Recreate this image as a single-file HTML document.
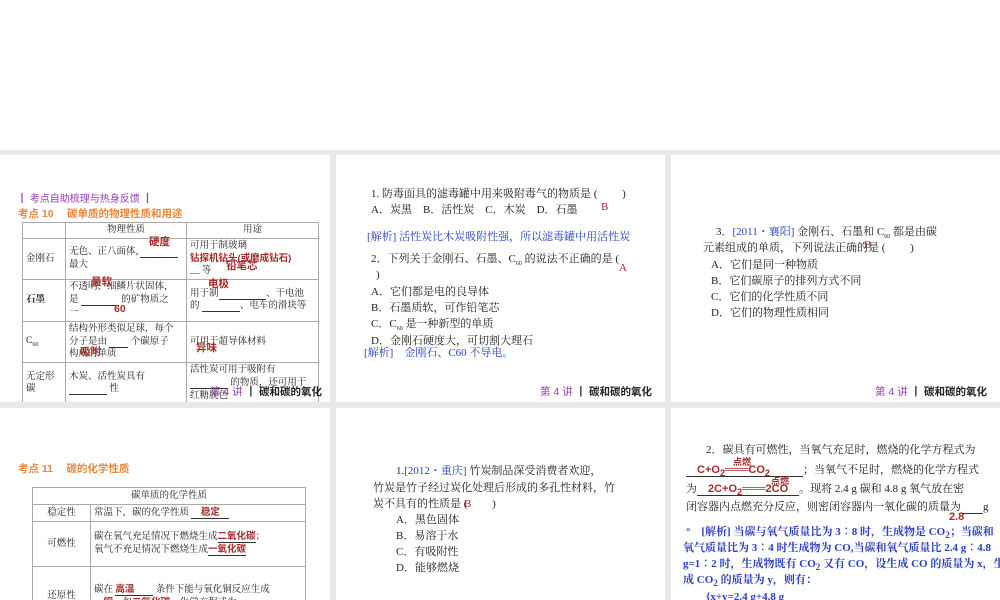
<!DOCTYPE html>
<html><head><meta charset="utf-8"><style>
*{margin:0;padding:0;box-sizing:border-box}
body{width:1000px;height:600px;background:#fff;position:relative;overflow:hidden;font-family:"Liberation Serif","Noto Serif CJK SC",serif;font-size:10.5px;color:#222}
.bg{position:absolute;left:0;top:150px;width:1000px;height:450px;background:#e9e9e9}
.p{position:absolute;background:#fff;overflow:hidden}
.a{position:absolute;white-space:nowrap;line-height:1.45}
.q .a{font-size:11px}
.r{color:#a52a2a;font-family:"Liberation Sans","Noto Sans CJK SC",sans-serif;font-weight:bold}
.bl{color:#2a3fc0}
.or{color:#e8873a;font-family:"Liberation Sans","Noto Sans CJK SC",sans-serif;font-weight:bold;font-size:10.5px}
.pu{color:#9a3ab8;font-family:"Liberation Sans","Noto Sans CJK SC",sans-serif}
table{border-collapse:collapse;position:absolute}
td{border:1px solid #aaa;font-size:9.5px;line-height:1.35;padding:1px 3px;vertical-align:middle}
.ft{position:absolute;font-family:"Liberation Sans","Noto Sans CJK SC",sans-serif;font-size:10.5px;white-space:nowrap}
u{text-decoration:none;border-bottom:1px solid #333}
</style></head><body>
<div class="bg"></div>

<div class="p" style="left:0;top:155px;width:330px;height:247px">
<div class="a pu" style="left:17px;top:38px;font-size:10px">┃ 考点自助梳理与热身反馈 ┃</div>
<div class="a or" style="left:18px;top:52px">考点 10　 碳单质的物理性质和用途</div>
<table style="left:22px;top:67px;width:297px">
<tr style="height:15px"><td style="width:43px"></td><td style="width:121px;text-align:center">物理性质</td><td style="text-align:center">用途</td></tr>
<tr style="height:40px"><td>金刚石</td><td>无色、正八面体，<u>　　　　</u><br>最大</td><td>可用于制玻璃<br><span class="r" style="color:#a52a2a">钻探机钻头(或磨成钻石)</span><br>__ 等</td></tr>
<tr style="height:39px"><td><b>石墨</b></td><td>不透明、细鳞片状固体，<br>是 <u>　　　　</u> 的矿物质之<br>一</td><td>用于制<u>　　　　　</u>、干电池<br>的 <u>　　　　</u>、电车的滑块等</td></tr>
<tr style="height:39px"><td>C<sub style="font-size:6px">60</sub></td><td>结构外形类似足球，每个<br>分子是由 <u>　　</u> 个碳原子<br>构成的单质</td><td>可用于超导体材料</td></tr>
<tr style="height:39px"><td>无定形<br>碳</td><td>木炭、活性炭具有<br><u>　　　　</u> 性</td><td>活性炭可用于吸附有<br><u>　　　　</u> 的物质，还可用于<br>红糖脱色</td></tr>
</table>
<div class="a r" style="left:149px;top:80px">硬度</div>
<div class="a r" style="left:226px;top:104px">铅笔芯</div>
<div class="a r" style="left:91px;top:120px">最软</div>
<div class="a r" style="left:208px;top:122px">电极</div>
<div class="a r" style="left:114px;top:147px">60</div>
<div class="a r" style="left:80px;top:190px">吸附</div>
<div class="a r" style="left:196px;top:186px">异味</div>
<div class="ft" style="left:210px;top:229px"><span class="pu">第 4 讲</span> ┃ <b>碳和碳的氧化</b></div>
</div>

<div class="p q" style="left:336px;top:155px;width:329px;height:247px">
<div class="a" style="left:35px;top:32px">1. 防毒面具的滤毒罐中用来吸附毒气的物质是 (　　 )</div>
<div class="a" style="left:35px;top:48px">A．炭黑　B．活性炭　C．木炭　D．石墨</div>
<div class="a" style="left:265px;top:45px;color:#a52a2a">B</div>
<div class="a bl" style="left:31px;top:75px">[解析] 活性炭比木炭吸附性强，所以滤毒罐中用活性炭</div>
<div class="a" style="left:35px;top:97px">2．下列关于金刚石、石墨、C<sub style="font-size:6px">60</sub> 的说法不正确的是 (</div>
<div class="a" style="left:283px;top:106px;color:#a52a2a">A</div>
<div class="a" style="left:40px;top:113px">)</div>
<div class="a" style="left:35px;top:130px">A．它们都是电的良导体</div>
<div class="a" style="left:35px;top:146px">B．石墨质软，可作铅笔芯</div>
<div class="a" style="left:35px;top:162px">C．C<sub style="font-size:6px">60</sub> 是一种新型的单质</div>
<div class="a" style="left:35px;top:179px">D．金刚石硬度大，可切割大理石</div>
<div class="a bl" style="left:28px;top:191px">[解析]　金刚石、C60 不导电。</div>
<div class="ft" style="left:204px;top:229px"><span class="pu">第 4 讲</span> ┃ <b>碳和碳的氧化</b></div>
</div>

<div class="p q" style="left:671px;top:155px;width:329px;height:247px">
<div class="a" style="left:45px;top:70px">3．<span class="bl">[2011・襄阳]</span> 金刚石、石墨和 C<sub style="font-size:6px">60</sub> 都是由碳</div>
<div class="a" style="left:32px;top:86px">元素组成的单质，下列说法正确的是 (　　 )</div>
<div class="a" style="left:193px;top:83px;color:#a52a2a">B</div>
<div class="a" style="left:40px;top:103px">A．它们是同一种物质</div>
<div class="a" style="left:40px;top:119px">B．它们碳原子的排列方式不同</div>
<div class="a" style="left:40px;top:135px">C．它们的化学性质不同</div>
<div class="a" style="left:40px;top:151px">D．它们的物理性质相同</div>
<div class="ft" style="left:204px;top:229px"><span class="pu">第 4 讲</span> ┃ <b>碳和碳的氧化</b></div>
</div>

<div class="p" style="left:0;top:408px;width:330px;height:192px">
<div class="a or" style="left:18px;top:54px">考点 11　 碳的化学性质</div>
<table style="left:32px;top:79px;width:274px">
<tr style="height:17px"><td colspan="2" style="text-align:center">碳单质的化学性质</td></tr>
<tr style="height:17px"><td style="width:58px;text-align:center">稳定性</td><td>常温下，碳的化学性质 <u class="r">　稳定　</u></td></tr>
<tr style="height:45px"><td style="text-align:center">可燃性</td><td>碳在氧气充足情况下燃烧生成<u class="r">二氧化碳</u>；<br>氧气不充足情况下燃烧生成<u class="r">一氧化碳</u></td></tr>
<tr style="height:60px"><td style="text-align:center">还原性</td><td>碳在 <u><span class="r">高温</span>　　</u> 条件下能与氧化铜反应生成<br>　<span class="r">铜</span>　和<span class="r">二氧化碳</span>，化学方程式为</td></tr>
</table>
</div>

<div class="p q" style="left:336px;top:408px;width:329px;height:192px">
<div class="a" style="left:60px;top:56px">1.<span class="bl">[2012・重庆]</span> 竹炭制品深受消费者欢迎，</div>
<div class="a" style="left:37px;top:73px">竹炭是竹子经过炭化处理后形成的多孔性材料，竹</div>
<div class="a" style="left:37px;top:89px">炭不具有的性质是 (　　 )</div>
<div class="a" style="left:128px;top:89px;color:#a52a2a">B</div>
<div class="a" style="left:60px;top:105px">A．黑色固体</div>
<div class="a" style="left:60px;top:121px">B．易溶于水</div>
<div class="a" style="left:60px;top:137px">C．有吸附性</div>
<div class="a" style="left:60px;top:153px">D．能够燃烧</div>
</div>

<div class="p q" style="left:671px;top:408px;width:329px;height:192px">
<div class="a" style="left:35px;top:35px">2．碳具有可燃性，当氧气充足时，燃烧的化学方程式为</div>
<div class="a" style="left:15px;top:55px"><u>　<span class="r">C+O<sub>2</sub>═══CO<sub>2</sub></span>　　　</u>；当氧气不足时，燃烧的化学方程式</div>
<div class="a r" style="left:62px;top:48px;font-size:9px">点燃</div>
<div class="a" style="left:15px;top:74px">为<u>　<span class="r">2C+O<sub>2</sub>═══2CO</span>　</u>。现将 2.4 g 碳和 4.8 g 氧气放在密</div>
<div class="a r" style="left:100px;top:67px;font-size:9px">点燃</div>
<div class="a" style="left:15px;top:92px">闭容器内点燃充分反应，则密闭容器内一氧化碳的质量为<u>　　</u>g</div>
<div class="a r" style="left:278px;top:102px">2.8</div>
<div class="a bl" style="left:15px;top:117px;font-weight:bold">°　[解析] 当碳与氧气质量比为 3∶8 时，生成物是 CO<sub>2</sub>；当碳和</div>
<div class="a bl" style="left:12px;top:133px;font-weight:bold">氧气质量比为 3∶4 时生成物为 CO,当碳和氧气质量比 2.4 g∶4.8</div>
<div class="a bl" style="left:12px;top:149px;font-weight:bold">g=1∶2 时，生成物既有 CO<sub>2</sub> 又有 CO，设生成 CO 的质量为 x，生</div>
<div class="a bl" style="left:12px;top:165px;font-weight:bold">成 CO<sub>2</sub> 的质量为 y，则有：</div>
<div class="a bl" style="left:35px;top:182px;font-weight:bold">{x+y=2.4 g+4.8 g</div>
</div>
</body></html>
